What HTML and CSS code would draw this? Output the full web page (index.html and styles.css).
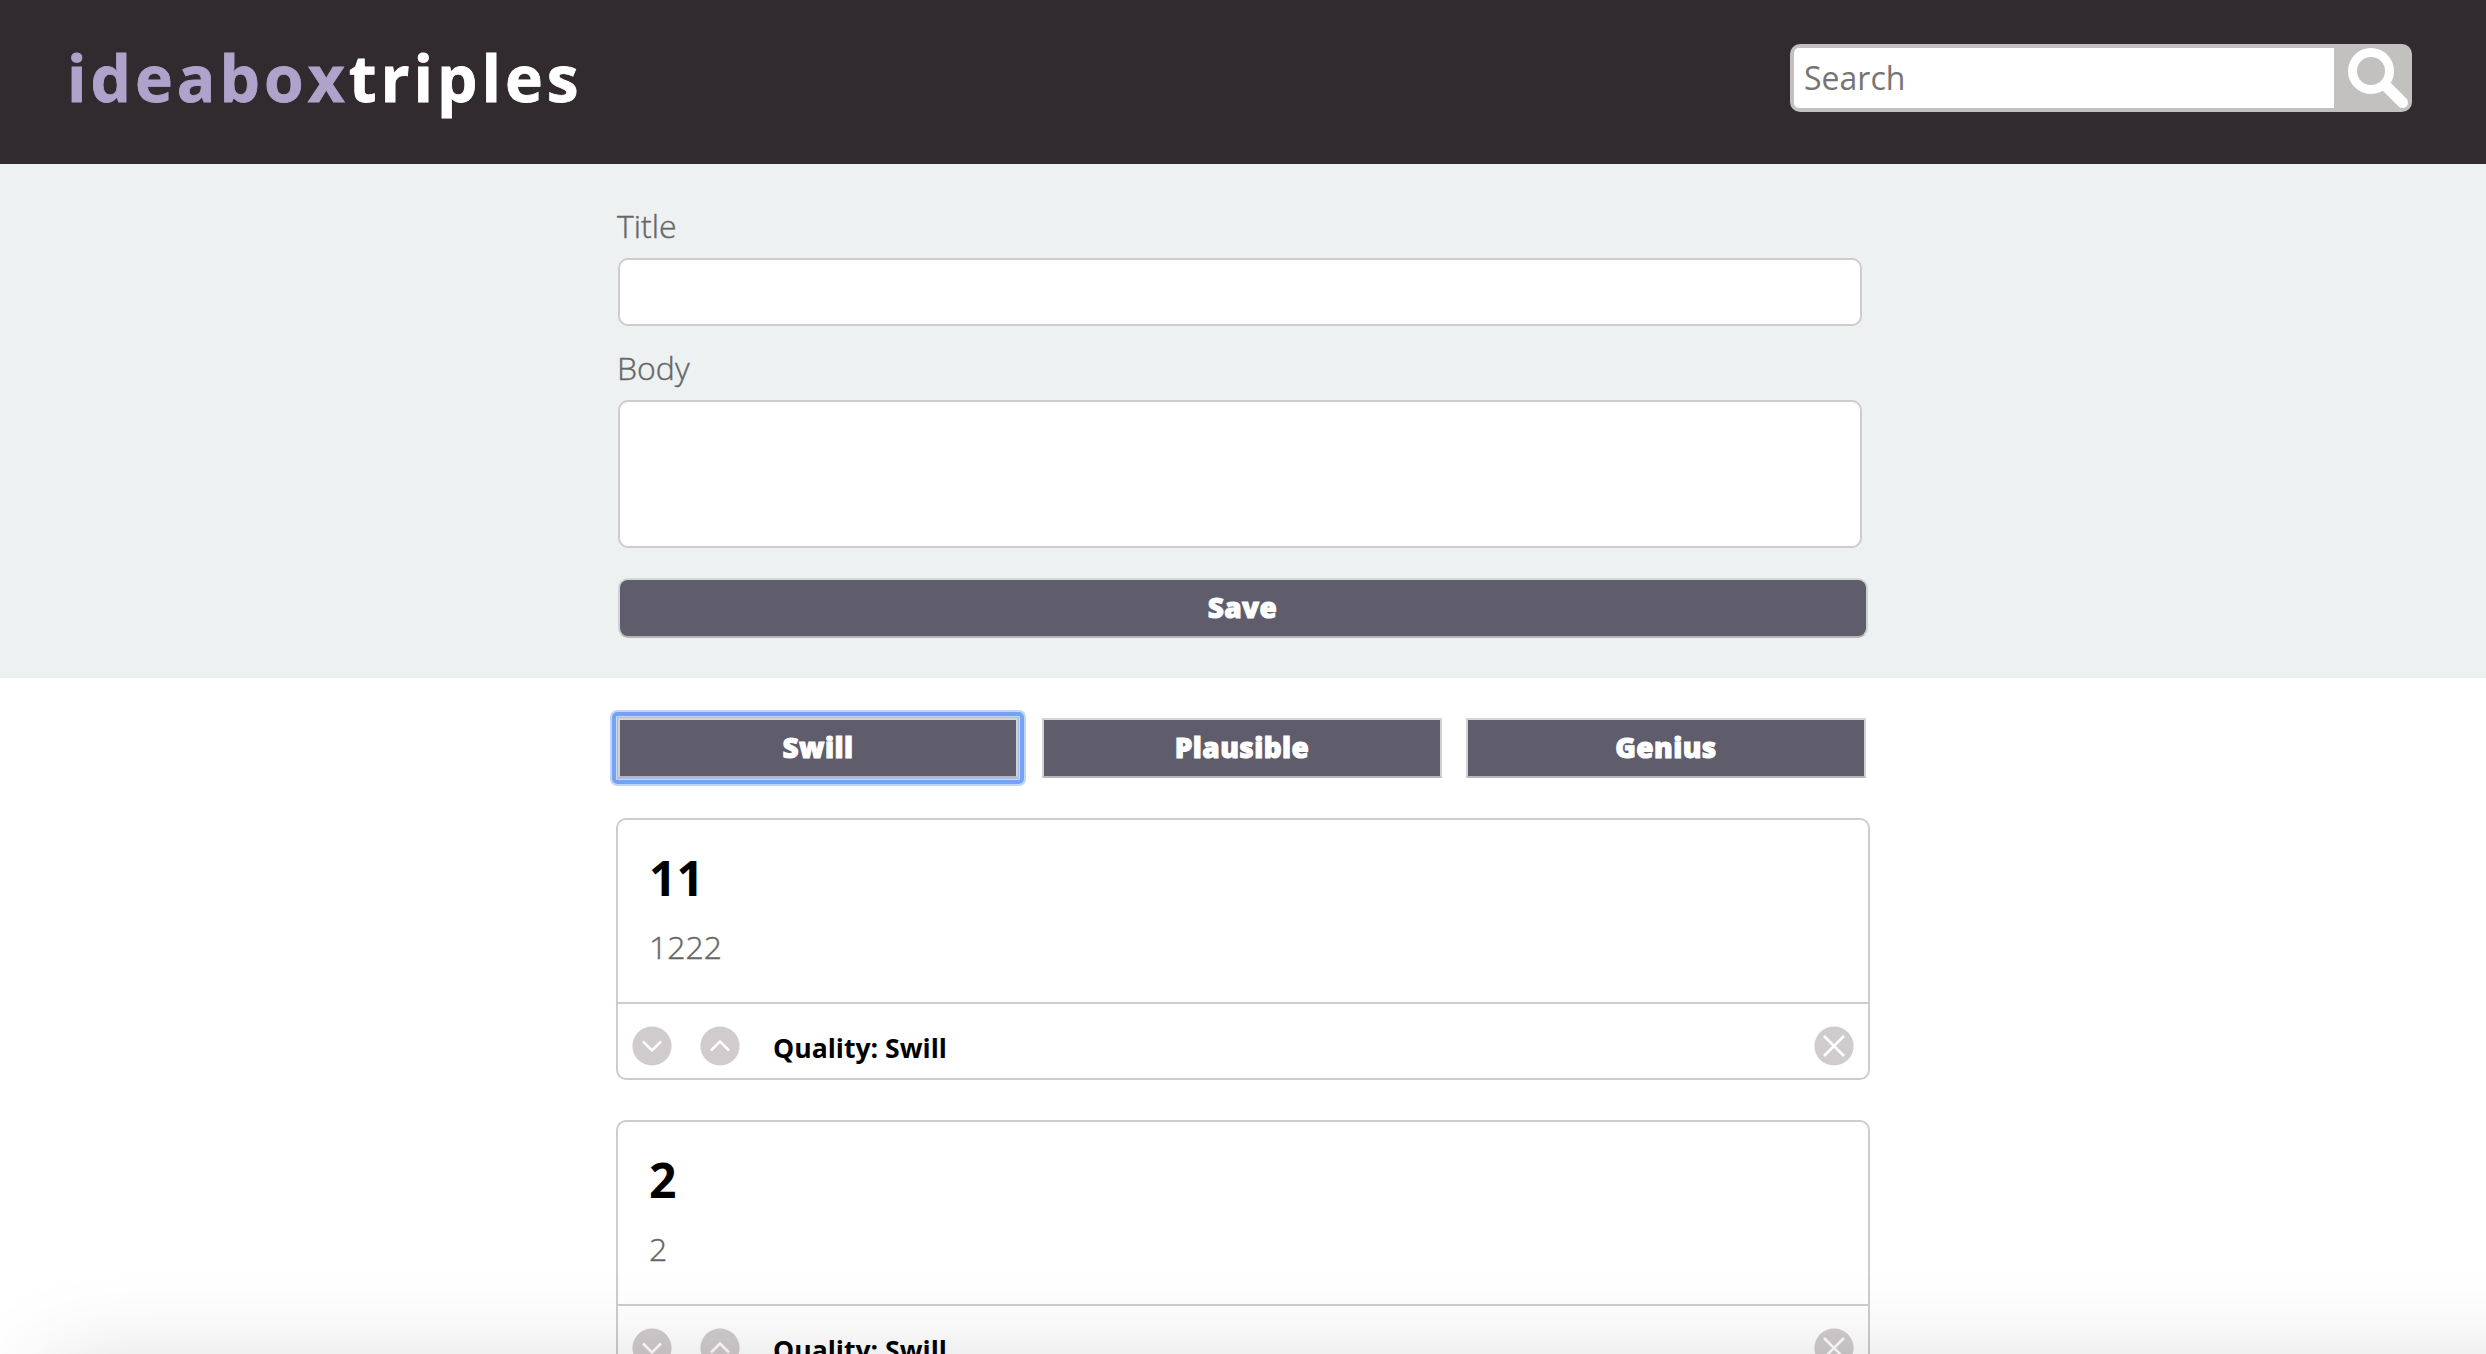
FILE: index.html
```html
<!DOCTYPE html>
<html lang="en">
<head>
<meta charset="utf-8">
<title>ideabox</title>
<link rel="stylesheet" href="styles.css">
</head>
<body>
<header class="header">
  <h1 class="logo"><span class="logo-accent">ideabox</span>triples</h1>
  <form class="search">
    <input class="search-input" type="text" placeholder="Search">
    <svg class="search-icon" viewBox="0 0 60 60"><circle cx="23" cy="23" r="18.500" fill="none" stroke="#fff" stroke-width="9"/><path d="M38 38L54.500 54.500" stroke="#fff" stroke-width="11" stroke-linecap="round"/></svg>
  </form>
</header>
<section class="entry">
  <form class="column entry-form">
    <label class="label" for="title">Title</label>
    <input class="field" id="title" type="text">
    <label class="label" for="body">Body</label>
    <textarea class="field field-body" id="body"></textarea>
    <button class="button save" type="button">Save</button>
  </form>
</section>
<main class="column">
  <nav class="filters">
    <button class="button focused" type="button">Swill</button>
    <button class="button" type="button">Plausible</button>
    <button class="button" type="button">Genius</button>
  </nav>
  <article class="card">
    <div class="card-content">
      <h2 class="card-title">11</h2>
      <p class="card-text">1222</p>
    </div>
    <footer class="card-footer">
      <svg class="icon" viewBox="0 0 40 40"><circle cx="20" cy="20" r="19.600"/><path d="M11 15.500L20 24.500L29 15.500"/></svg>
      <svg class="icon" viewBox="0 0 40 40"><circle cx="20" cy="20" r="19.600"/><path d="M11 24.500L20 15.500L29 24.500"/></svg>
      <span class="quality">Quality: Swill</span>
      <svg class="icon" viewBox="0 0 40 40"><circle cx="20" cy="20" r="19.600"/><path d="M10 10L30 30M30 10L10 30"/></svg>
    </footer>
  </article>
  <article class="card">
    <div class="card-content">
      <h2 class="card-title">2</h2>
      <p class="card-text">2</p>
    </div>
    <footer class="card-footer">
      <svg class="icon" viewBox="0 0 40 40"><circle cx="20" cy="20" r="19.600"/><path d="M11 15.500L20 24.500L29 15.500"/></svg>
      <svg class="icon" viewBox="0 0 40 40"><circle cx="20" cy="20" r="19.600"/><path d="M11 24.500L20 15.500L29 24.500"/></svg>
      <span class="quality">Quality: Swill</span>
      <svg class="icon" viewBox="0 0 40 40"><circle cx="20" cy="20" r="19.600"/><path d="M10 10L30 30M30 10L10 30"/></svg>
    </footer>
  </article>
</main>
<div class="bottom-shade"></div>
</body>
</html>
```
FILE: styles.css
```css
* { box-sizing: border-box; margin: 0; padding: 0; }
html { overflow: hidden; }
body { height: 1354px; overflow: hidden; background: #fff; font-family: "Open Sans", sans-serif; position: relative; }
.header { display: flex; justify-content: space-between; align-items: flex-start; height: 164px; padding: 44px 74px 0 67px; background: #312a2e; }
.logo { margin-top: -2px; font-size: 64px; font-weight: 700; line-height: 72px; letter-spacing: 4px; color: #fff; -webkit-text-stroke: 0.8px; }
.logo-accent { color: #aea4cb; }
.search { display: flex; width: 622px; height: 68px; border: 4px solid #c2c1bf; border-radius: 10px; background: #c2c1bf; }
.search-input { width: 540px; height: 60px; padding: 0 0 2px 10px; border: 0; border-radius: 5px 0 0 5px; font: 32px "Open Sans", sans-serif; background: #fff; outline: 0; }
.search-input::placeholder { color: #757575; }
.search-icon { width: 60px; height: 60px; margin-left: 14px; }
.entry { height: 514px; padding-top: 42px; background: #edf1f2; }
.column { width: 1254px; margin-left: 616px; }
.entry-form { display: flex; flex-direction: column; padding-left: 2px; }
.label { margin-left: -1px; height: 52px; line-height: 40px; font-size: 32px; font-weight: 300; color: #666; -webkit-text-stroke: 0.4px; }
.field { display: block; width: 1244px; height: 68px; margin-bottom: 22px; border: 2px solid #d0cbcd; border-radius: 10px; background: #fff; resize: none; }
.field-body { height: 148px; margin-bottom: 30px; }
.button { width: 400px; height: 60px; padding-bottom: 2px; border: 2px solid; border-color: #d5d6d6 #d0d1d2 #b7b6b8; background: #5f5c6b; color: #fff; font: 800 28px/54px "Open Sans", sans-serif; letter-spacing: 0.4px; -webkit-text-stroke: 1px; outline: 0; }
.save { width: 1250px; padding-right: 1px; border-radius: 10px; }
.filters { display: flex; gap: 24px; padding: 40px 0 40px 2px; }
.focused { position: relative; }
.focused::after { content: ""; position: absolute; inset: -8px; border: 4px solid #75a2f5; border-radius: 5px; box-shadow: 0 0 0 2px #c0d5fb, inset 0 0 0 1px #c5d7fb, inset 0 0 0 2px #a5bdea; }
.card { height: 262px; margin-bottom: 40px; border: 2px solid #d0cbcd; border-radius: 10px; }
.card-content { height: 184px; padding: 26px 31px 0; border-bottom: 2px solid #d0cbcd; }
.card-title { font-size: 48px; line-height: 64px; font-weight: 700; color: #000; }
.card-text { margin-top: 15px; font-size: 32px; line-height: 44px; font-weight: 300; color: #666; -webkit-text-stroke: 0.4px; }
.card-footer { display: flex; gap: 28px; padding: 22px 14px 0; }
.icon { width: 40px; height: 40px; flex: none; fill: #d0cbcd; }
.icon path { fill: none; stroke: #fff; stroke-width: 2.6; }
.quality { flex: 1; margin-left: 5px; font-size: 26.6px; line-height: 44px; font-weight: 700; color: #000; }
.bottom-shade { position: absolute; left: 50px; right: -150px; top: 1374px; height: 200px; box-shadow: 0 0 100px rgba(0,0,0,.18); }
```
